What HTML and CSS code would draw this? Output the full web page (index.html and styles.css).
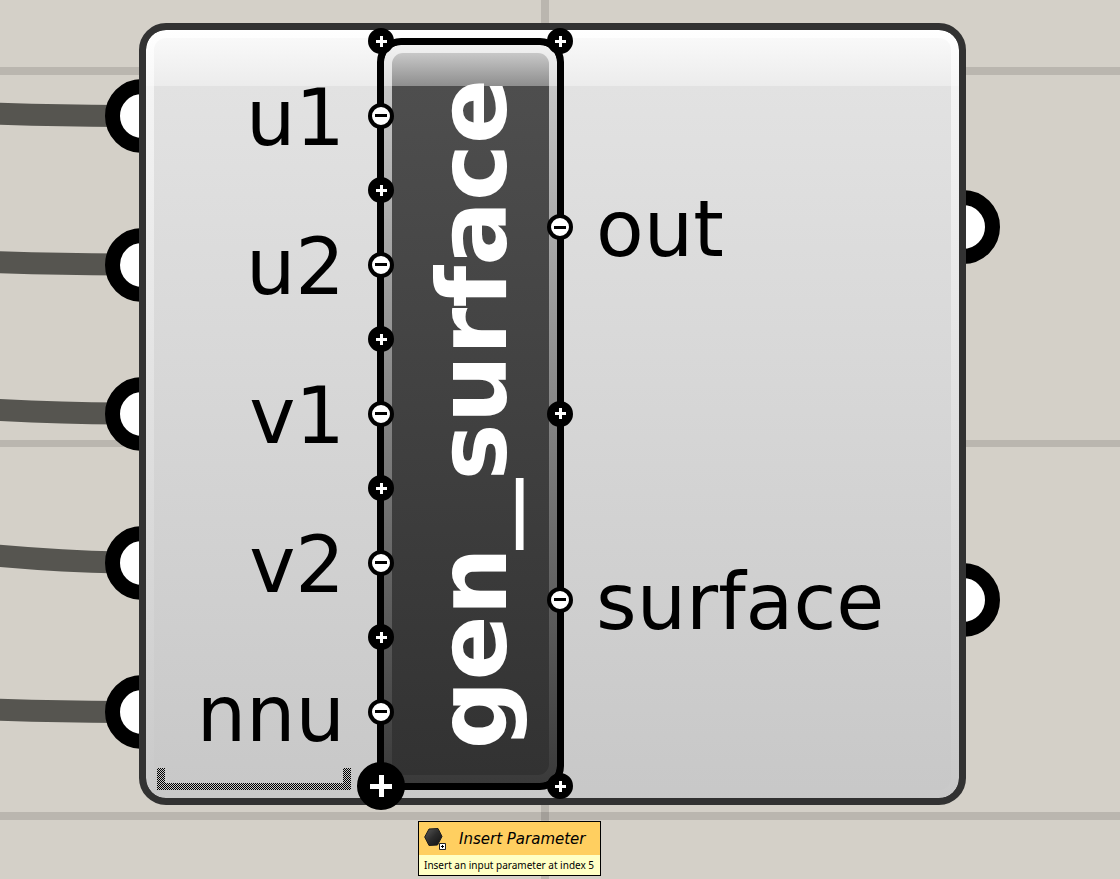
FILE: index.html
```html
<!DOCTYPE html>
<html lang="en">
<head>
<meta charset="utf-8">
<title>gen_surface</title>
<link rel="stylesheet" href="styles.css">
</head>
<body>
<main class="canvas">
  <svg class="backdrop" aria-hidden="true">
    <g class="grid">
      <line x1="545" y1="0" x2="545" y2="100%"/>
      <line x1="0" y1="71" x2="100%" y2="71"/>
      <line class="thin" x1="0" y1="443.5" x2="100%" y2="443.5"/>
      <line x1="0" y1="816" x2="100%" y2="816"/>
    </g>
    <g class="wires">
      <path d="M-10 113.500Q60 116 120 116"/>
      <path d="M-10 262Q60 264.500 120 264.500"/>
      <path d="M-10 409.500Q60 413.500 120 413.500"/>
      <path d="M-10 555Q60 561.500 120 562.500"/>
      <path d="M-10 709.500Q60 712 120 712"/>
    </g>
  </svg>

  <section class="node">
    <ul class="params inputs">
      <li class="param"><span class="port"></span>u1</li>
      <li class="param"><span class="port"></span>u2</li>
      <li class="param"><span class="port"></span>v1</li>
      <li class="param"><span class="port"></span>v2</li>
      <li class="param"><span class="port"></span>nnu</li>
    </ul>

    <div class="core">
      <div class="frame">
        <h1 class="panel"><span class="title">gen<span class="underscore">_</span>surface</span></h1>
      </div>
      <div class="rail rail-left">
        <button class="handle add" aria-label="Insert input 0"></button>
        <button class="handle remove" aria-label="Remove u1"></button>
        <button class="handle add" aria-label="Insert input 1"></button>
        <button class="handle remove" aria-label="Remove u2"></button>
        <button class="handle add" aria-label="Insert input 2"></button>
        <button class="handle remove" aria-label="Remove v1"></button>
        <button class="handle add" aria-label="Insert input 3"></button>
        <button class="handle remove" aria-label="Remove v2"></button>
        <button class="handle add" aria-label="Insert input 4"></button>
        <button class="handle remove" aria-label="Remove nnu"></button>
        <button class="handle add active" aria-label="Insert input 5" aria-describedby="tip"></button>
      </div>
      <div class="rail rail-right">
        <button class="handle add" aria-label="Insert output 0"></button>
        <button class="handle remove" aria-label="Remove out"></button>
        <button class="handle add" aria-label="Insert output 1"></button>
        <button class="handle remove" aria-label="Remove surface"></button>
        <button class="handle add" aria-label="Insert output 2"></button>
      </div>
      <div class="tooltip" id="tip" role="tooltip">
        <div class="tip-head">
          <svg class="tip-icon" width="24" height="24" viewBox="0 0 24 24" aria-hidden="true">
            <defs>
              <linearGradient id="hex" x1="0" y1="0" x2="1" y2="1">
                <stop offset="0" stop-color="#5a5a5a"/>
                <stop offset=".5" stop-color="#2b2b2b"/>
                <stop offset="1" stop-color="#111"/>
              </linearGradient>
            </defs>
            <path d="M5 2l9-.5 4 8-4.500 8.500-8.500.5L.700 10z" fill="url(#hex)" stroke="#1c1c1c" stroke-linejoin="round"/>
            <path d="M15.500 16.500h6v6h-6z" fill="#fff" stroke="#222"/>
            <path d="M17 19.500h3M18.500 18v3" stroke="#000"/>
          </svg>
          <strong class="tip-title">Insert Parameter</strong>
        </div>
        <p class="tip-text">Insert an input parameter at index 5</p>
      </div>
    </div>

    <ul class="params outputs">
      <li class="param"><span class="port"></span>out</li>
      <li class="param"><span class="port"></span>surface</li>
    </ul>
  </section>
</main>
</body>
</html>
```
FILE: styles.css
```css
* {
  box-sizing: border-box;
}

body {
  margin: 0;
  background: #d4d0c8;
  font-family: "DejaVu Sans", Verdana, sans-serif;
  color: #000;
}

.canvas {
  position: relative;
  isolation: isolate;
  min-height: 100vh;
  padding: 23px 154px 74px 139px;
  overflow: hidden;
}

.backdrop {
  position: absolute;
  inset: 0;
  z-index: -2;
  width: 100%;
  height: 100%;
}

.grid line {
  stroke: #000;
  stroke-opacity: 0.12;
  stroke-width: 8px;
}

.grid .thin {
  stroke-width: 7px;
}

.wires path {
  fill: none;
  stroke: #565550;
  stroke-width: 22px;
}

/* Component body */
.node {
  position: relative;
  display: grid;
  grid-template-columns: minmax(0, 231fr) 187px minmax(0, 395fr);
  padding: 11px 0 12px;
  border: 7px solid #323232;
  border-radius: 27px;
  background: linear-gradient(#fff, #f7f7f7 56px, #f4f4f4 56px, #c9c9c9) padding-box, #323232;
}

.node::before {
  content: "";
  position: absolute;
  inset: 8px;
  border-radius: 12px;
  background: linear-gradient(#f9f9f9, #ececec 48px, #e2e2e2 48px, #c8c8c8);
}

.params {
  position: relative;
  display: flex;
  flex-direction: column;
  margin: 0;
  padding: 0;
  list-style: none;
  font-size: 78px;
  line-height: 96px;
}

.param {
  position: relative;
  display: flex;
  flex: 1 0 149px;
  align-items: center;
  padding: 4px 32px 0;
}

.inputs .param {
  justify-content: flex-end;
}

.inputs::after {
  content: "";
  position: absolute;
  left: 11px;
  right: 26px;
  bottom: -4px;
  height: 22px;
  background: repeating-conic-gradient(#000 0 25%, #c9c9c9 0 50%) 0 0 / 2px 2px;
  clip-path: polygon(0 0, 8px 0, 8px 15px, calc(100% - 8px) 15px, calc(100% - 8px) 0, 100% 0, 100% 100%, 0 100%);
}

.port {
  position: absolute;
  z-index: -1;
  top: calc(50% - 37px);
  width: 74px;
  height: 74px;
  border: 15px solid #000;
  border-radius: 50%;
  background: #fff;
}

.inputs .port {
  left: -41px;
}

.outputs .port {
  right: -41px;
}

/* Dark name plate */
.core {
  position: relative;
  display: grid;
  margin: -3px 0 -4px;
}

.frame {
  display: grid;
  padding: 8px;
  border: 7px solid #000;
  border-radius: 24px;
  background: linear-gradient(#f2f2f2, #dcdcdc 41px, #c6c6c6 41px, #3a3a3a) padding-box, #000;
}

.panel {
  display: grid;
  place-items: center;
  margin: 0;
  padding-left: 4px;
  border-radius: 11px;
  background: linear-gradient(#c8c8c8, #8e8e8e 33px, #4e4e4e 33px, #323232);
}

.title {
  writing-mode: vertical-rl;
  transform: rotate(180deg);
  color: #fff;
  font-size: 96px;
  font-weight: bold;
  line-height: 120px;
  white-space: nowrap;
}

.underscore {
  font-family: "Liberation Sans", Arial, sans-serif;
  font-size: 120px;
  line-height: 0;
  vertical-align: 8px;
  -webkit-text-stroke: 3px #fff;
}

.rail {
  position: absolute;
  top: -10px;
  bottom: -9px;
  display: flex;
  flex-direction: column;
  align-items: center;
  justify-content: space-between;
  width: 26px;
}

.rail-left {
  left: -9px;
}

.rail-right {
  right: -9px;
}

.handle {
  flex: none;
  width: 26px;
  height: 26px;
  padding: 0;
  border: 4px solid #000;
  border-radius: 50%;
}

.add {
  background:
    linear-gradient(#fff, #fff) center / 11px 3px no-repeat,
    linear-gradient(#fff, #fff) center / 3px 11px no-repeat,
    #000;
}

.remove {
  background: linear-gradient(#000, #000) center / 12px 3px no-repeat, #fff;
}

.active {
  width: 48px;
  height: 48px;
  margin: -11px;
  background-size: 22px 5px, 5px 22px, auto;
}

.tooltip {
  position: absolute;
  top: calc(100% + 31px);
  left: 41px;
  width: 183px;
  border: 1px solid #000;
  background: #ffffc4;
}

.tip-head {
  display: flex;
  align-items: center;
  gap: 11px;
  height: 33px;
  padding: 0 5px;
  background: #ffcf60;
}

.tip-icon {
  flex: none;
}

.tip-title {
  font-size: 15px;
  font-style: italic;
  font-weight: normal;
  white-space: nowrap;
}

.tip-text {
  margin: 0;
  padding: 0 5px;
  font-family: "Noto Sans", sans-serif;
  font-size: 10px;
  line-height: 20px;
  white-space: nowrap;
}
```
